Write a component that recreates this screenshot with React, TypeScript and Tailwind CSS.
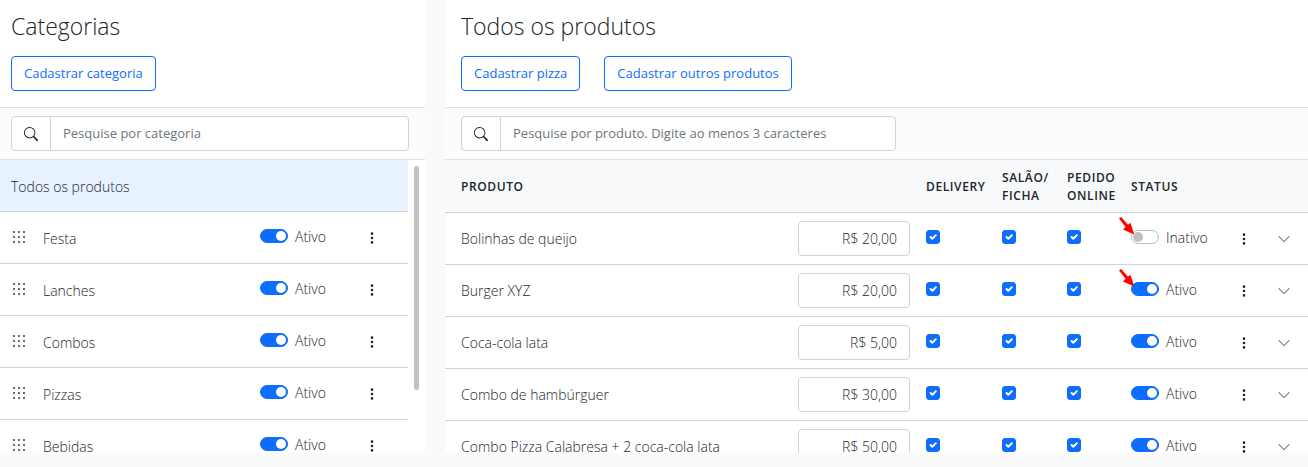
import { useState } from 'react';
import { BsChevronDown, BsSearch, BsThreeDotsVertical } from 'react-icons/bs';

interface Category {
  name: string;
  active: boolean;
}

interface Product {
  name: string;
  price: string;
  active: boolean;
  highlighted?: boolean;
}

const CATEGORIES: Category[] = [
  { name: 'Festa', active: true },
  { name: 'Lanches', active: true },
  { name: 'Combos', active: true },
  { name: 'Pizzas', active: true },
  { name: 'Bebidas', active: true },
];

const PRODUCTS: Product[] = [
  { name: 'Bolinhas de queijo', price: 'R$ 20,00', active: false, highlighted: true },
  { name: 'Burger XYZ', price: 'R$ 20,00', active: true, highlighted: true },
  { name: 'Coca-cola lata', price: 'R$ 5,00', active: true },
  { name: 'Combo de hambúrguer', price: 'R$ 30,00', active: true },
  { name: 'Combo Pizza Calabresa + 2 coca-cola lata', price: 'R$ 50,00', active: true },
];

const CHANNELS = ['Delivery', 'Salão/Ficha', 'Pedido online'];

function Switch({ initial }: { initial: boolean }) {
  const [on, setOn] = useState(initial);

  return (
    <label className="flex cursor-pointer items-center gap-[7px]">
      <span className="grid h-3.5 w-7 items-center">
        <input
          type="checkbox"
          role="switch"
          checked={on}
          onChange={(e) => setOn(e.target.checked)}
          className="col-start-1 row-start-1 h-3.5 w-7 cursor-pointer appearance-none rounded-full border border-[#bfbfbf] bg-white checked:border-[#0d6efd] checked:bg-[#0d6efd]"
        />
        <span
          className={`pointer-events-none col-start-1 row-start-1 mx-0.5 h-2.5 w-2.5 rounded-full ${
            on ? 'justify-self-end bg-white' : 'bg-[#bfbfbf]'
          }`}
        />
      </span>
      <span className="pt-0.5">{on ? 'Ativo' : 'Inativo'}</span>
    </label>
  );
}

function Checkbox({ label }: { label: string }) {
  const [checked, setChecked] = useState(true);

  return (
    <span className="grid h-3.5 w-3.5">
      <input
        type="checkbox"
        aria-label={label}
        checked={checked}
        onChange={(e) => setChecked(e.target.checked)}
        className="col-start-1 row-start-1 h-3.5 w-3.5 cursor-pointer appearance-none rounded-[3px] border border-[#bfbfbf] bg-white checked:border-[#0d6efd] checked:bg-[#0d6efd]"
      />
      {checked && (
        <svg viewBox="0 0 20 20" className="pointer-events-none col-start-1 row-start-1 h-3.5 w-3.5">
          <path d="m6.5 10 2.5 2.5 5-5" fill="none" stroke="#fff" strokeWidth="2.8" strokeLinecap="round" strokeLinejoin="round" />
        </svg>
      )}
    </span>
  );
}

function OutlineButton({ children }: { children: React.ReactNode }) {
  return (
    <button
      type="button"
      className="h-[35px] cursor-pointer rounded border border-[#0d6efd] px-3 text-[13px] font-normal text-[#0d6efd] hover:bg-[#0d6efd] hover:text-white"
    >
      {children}
    </button>
  );
}

function SearchBox({ id, placeholder }: { id: string; placeholder: string }) {
  return (
    <div className="flex h-[35px] w-full rounded border border-[#ced4da] bg-white">
      <label htmlFor={id} aria-label={placeholder} className="flex w-[39px] shrink-0 items-center justify-center border-r border-[#ced4da]">
        <BsSearch className="h-3.5 w-3.5" />
      </label>
      <input
        id={id}
        type="text"
        placeholder={placeholder}
        className="min-w-0 flex-1 px-3 text-[13px] font-normal outline-none placeholder:text-[#6c757d]"
      />
    </div>
  );
}

function MoreButton() {
  return (
    <button type="button" aria-label="Mais opções" className="flex h-6 w-6 cursor-pointer items-center justify-center">
      <BsThreeDotsVertical className="h-3.5 w-3.5" />
    </button>
  );
}

function DragHandle() {
  return (
    <svg viewBox="0 0 16 16" className="h-4 w-4 shrink-0 cursor-grab" fill="#6b6b6b">
      {[1, 6, 11].map((y) =>
        [2, 7, 12].map((x) => <rect key={`${x}-${y}`} x={x} y={y} width="2" height="2" />)
      )}
    </svg>
  );
}

// Red pointer drawn over the status switch
function Arrow() {
  return (
    <svg viewBox="0 0 16 18" className="pointer-events-none absolute -left-1 top-1 h-[18px] w-4" fill="#fe0000">
      <path d="M0 1.6 2.2 0 9 7.8 11.4 5.8 15.2 17.6 4 12.4 6.6 10Z" />
    </svg>
  );
}

function Categories() {
  return (
    <section className="flex min-h-0 flex-col bg-white">
      <header className="border-b border-[#dee2e6] pt-3 pr-4 pb-4 pl-[11px]">
        <h1 className="mb-4 text-[23px] leading-7">Categorias</h1>
        <OutlineButton>Cadastrar categoria</OutlineButton>
      </header>

      <div className="border-b border-[#dee2e6] bg-[#fcfcfc] py-2 pr-4 pl-[11px]">
        <SearchBox id="busca-categoria" placeholder="Pesquise por categoria" />
      </div>

      <div className="flex min-h-0 flex-1">
        <ul className="min-w-0 flex-1 overflow-hidden">
          <li className="flex h-[52px] items-center border-b border-[#ced4da] bg-[#e7f1ff] pt-0.5 pl-[11px]">
            <a href="#todos">Todos os produtos</a>
          </li>
          {CATEGORIES.map((category) => (
            <li key={category.name} className="flex h-[52px] items-center border-b border-[#ced4da] pr-6 pl-[11px]">
              <DragHandle />
              <a href={`#${category.name}`} className="ml-4 flex-1 pt-0.5">
                {category.name}
              </a>
              <div className="w-[100px] pb-1">
                <Switch initial={category.active} />
              </div>
              <MoreButton />
            </li>
          ))}
        </ul>
        {/* Scrollbar */}
        <div className="w-[17px] px-1.5 pt-1.5">
          <div className="h-56 rounded-full bg-[#c1c1c1]" />
        </div>
      </div>
    </section>
  );
}

function Products() {
  return (
    <section className="flex min-h-0 flex-col bg-white">
      <header className="border-b border-[#dee2e6] px-4 pt-3 pb-4">
        <h1 className="mb-4 text-[23px] leading-7">Todos os produtos</h1>
        <div className="flex gap-6">
          <OutlineButton>Cadastrar pizza</OutlineButton>
          <OutlineButton>Cadastrar outros produtos</OutlineButton>
        </div>
      </header>

      <div className="border-b border-[#dee2e6] bg-[#fcfcfc] px-4 py-2">
        <div className="max-w-[435px]">
          <SearchBox id="busca-produto" placeholder="Pesquise por produto. Digite ao menos 3 caracteres" />
        </div>
      </div>

      <div className="min-h-0 flex-1 overflow-hidden">
        <table className="w-full table-fixed">
          <colgroup>
            <col />
            <col className="w-32" />
            <col className="w-[76px]" />
            <col className="w-[65px]" />
            <col className="w-16" />
            <col className="w-[109px]" />
            <col className="w-10" />
            <col className="w-9" />
          </colgroup>
          <thead>
            <tr className="h-[52px] border-b border-[#ced4da] bg-[#f8f9fb] text-left text-xs leading-[18px] uppercase">
              <th className="pt-0.5 pl-4 font-semibold tracking-wider">Produto</th>
              <th />
              <th className="px-2 pt-0.5 font-semibold tracking-wider">Delivery</th>
              <th className="px-2 pt-0.5 font-semibold tracking-wider">
                Salão/
                <br />
                Ficha
              </th>
              <th className="px-2 pt-0.5 font-semibold tracking-wider">
                Pedido
                <br />
                online
              </th>
              <th className="px-2 pt-0.5 font-semibold tracking-wider">Status</th>
              <th />
              <th />
            </tr>
          </thead>
          <tbody>
            {PRODUCTS.map((product) => (
              <tr key={product.name} className="h-[52px] border-b border-[#ced4da]">
                <td className="truncate pt-0.5 pl-4">{product.name}</td>
                <td className="px-2">
                  <input
                    type="text"
                    aria-label={`Preço de ${product.name}`}
                    defaultValue={product.price}
                    className="block h-[35px] w-full rounded border border-[#ced4da] bg-white px-3 text-right"
                  />
                </td>
                {CHANNELS.map((channel) => (
                  <td key={channel} className="px-2 pb-0.5">
                    <Checkbox label={`${channel}: ${product.name}`} />
                  </td>
                ))}
                <td className="relative px-2 pb-0.5">
                  <Switch initial={product.active} />
                  {product.highlighted && <Arrow />}
                </td>
                <td className="pt-0.5">
                  <MoreButton />
                </td>
                <td className="pt-0.5">
                  <button type="button" aria-label="Expandir" className="flex h-6 w-6 cursor-pointer items-center justify-center">
                    <BsChevronDown className="h-3.5 w-3.5 text-[#6c757d]" />
                  </button>
                </td>
              </tr>
            ))}
          </tbody>
        </table>
      </div>
    </section>
  );
}

export default function App() {
  return (
    <main className="grid h-screen grid-cols-[minmax(0,33fr)_minmax(0,67fr)] gap-5 bg-[#fafafa] pb-3.5 font-['Open_Sans','Segoe_UI',sans-serif] text-sm font-light text-[#212529]">
      <Categories />
      <Products />
    </main>
  );
}
